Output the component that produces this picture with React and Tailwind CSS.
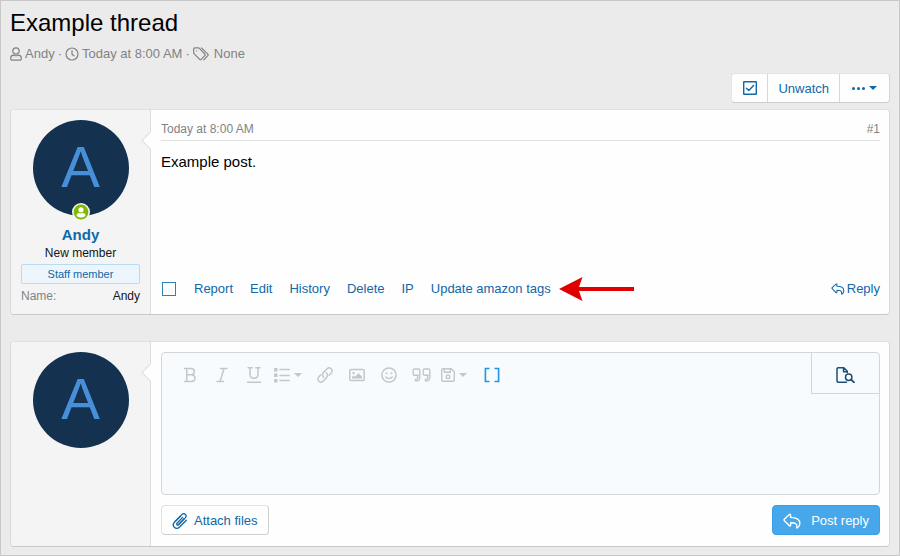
import React from "react";

function Icon({ children, className = "size-4", box = "0 0 16 16", stroke = 1.3 }) {
  return (
    <svg
      className={`shrink-0 ${className}`}
      viewBox={box}
      fill="none"
      stroke="currentColor"
      strokeWidth={stroke}
      strokeLinecap="round"
      strokeLinejoin="round"
      aria-hidden="true"
    >
      {children}
    </svg>
  );
}

const UserIcon = () => (
  <Icon className="h-[14px] w-3" box="0 0 12 14" stroke={1.2}>
    <circle cx="6" cy="4" r="3.2" />
    <path d="M3.6 8.2C1.8 8.4.7 9.6.7 11.2v.9c0 .6.4 1 1 1h8.6c.6 0 1-.4 1-1v-.9c0-1.6-1.1-2.8-2.900-3-1.500.700-3.300.700-4.800 0z" />
  </Icon>
);

const ClockIcon = () => (
  <Icon className="size-[14px]" box="0 0 14 14" stroke={1.2}>
    <circle cx="7" cy="7" r="6" />
    <path d="M7 3.500V7.300l2 1.500" />
  </Icon>
);

const TagsIcon = () => (
  <Icon className="h-[14px] w-4" box="0 0 16 14" stroke={1.2}>
    <path d="M.7 1.700v4.100c0 .3.100.6.300.8l5.600 5.700c.5.500 1.200.500 1.600 0l3.600-3.700c.5-.5.500-1.200 0-1.600L6.200 1.200C6 1 5.700.8 5.400.8H1.600c-.5 0-.9.4-.9.9z" />
    <path d="M8.500.900l6.300 6.200c.5.500.5 1.100 0 1.600l-4 4.200" />
    <circle cx="3.600" cy="3.800" r=".6" fill="currentColor" stroke="none" />
  </Icon>
);

const ReplyIcon = ({ className, stroke }) => (
  <Icon className={className} box="0 0 18 16" stroke={stroke}>
    <path d="M1.200 6.300L6.400 1.400c.5-.4 1.200-.1 1.200.5v2.500c4.900.1 9.200 1.200 9.200 6 0 1.900-1.100 3.500-2.300 4.400-.4.300-.9-.1-.8-.5.900-3.500-.9-4.500-6.100-4.600v2.500c0 .7-.7 1-1.200.5L1.200 7.400c-.3-.3-.3-.8 0-1.100z" />
  </Icon>
);

const Caret = () => (
  <svg className="h-1 w-2 shrink-0" viewBox="0 0 8 4" fill="currentColor" aria-hidden="true">
    <path d="M0 0h8L4 4z" />
  </svg>
);

const BoldIcon = () => (
  <Icon stroke={1.500}>
    <path d="M2.500 1.500H9c2.200 0 3.300 1.200 3.300 3S11.200 7.700 9 7.700H4.700M9 7.700c2.700 0 4 1.200 4 3.300s-1.300 3.500-3.800 3.500H2.500M4.700 1.500v13" />
  </Icon>
);
const ItalicIcon = () => (
  <Icon stroke={1.500}>
    <path d="M6.500 1.500H13M3 14.500h6.500M10 1.500l-4 13" />
  </Icon>
);
const UnderlineIcon = () => (
  <Icon stroke={1.500}>
    <path d="M2 .8h4.200M9.800.8H14M4 .8v6.500c0 2.500 1.500 4 4 4s4-1.500 4-4V.8M1.500 15.200h13" />
  </Icon>
);
const ListIcon = () => (
  <Icon>
    <path d="M6 2.500h9.300M6 8.500h9.300M6 13.500h9.300" strokeWidth="1.500" />
    <g fill="currentColor" stroke="none">
      <rect x="0" y="1" width="3.500" height="3.500" rx=".6" />
      <rect x="0" y="6.500" width="3.500" height="3.500" rx=".6" />
      <rect x="0" y="12" width="3.500" height="3.500" rx=".6" />
    </g>
  </Icon>
);
const LinkIcon = () => (
  <Icon stroke={1.500}>
    <path d="M6.700 10.200c-1.500-1.300-1.500-3.500-.2-4.900l3.300-3.400c1.300-1.300 3.200-1.300 4.400-.1s1.200 3.100-.1 4.400l-1.900 2" />
    <path d="M9.300 5.800c1.500 1.300 1.500 3.500.2 4.900l-3.300 3.400c-1.300 1.300-3.200 1.300-4.400.1s-1.200-3.100.1-4.400l1.900-2" />
  </Icon>
);
const ImageIcon = () => (
  <Icon stroke={1.500}>
    <rect x=".8" y="2.500" width="14.400" height="11" rx="1.200" />
    <circle cx="4.500" cy="6" r="1.200" fill="currentColor" stroke="none" />
    <path d="M3 11.500V10l1.700-1.500L6 9.700l3.500-3.400L13 9.500v2z" fill="currentColor" stroke="none" />
  </Icon>
);
const SmileIcon = () => (
  <Icon stroke={1.500}>
    <circle cx="8" cy="8" r="7.100" />
    <circle cx="5.500" cy="6.300" r="1" fill="currentColor" stroke="none" />
    <circle cx="10.500" cy="6.300" r="1" fill="currentColor" stroke="none" />
    <path d="M4.800 10c1.600 2 4.800 2 6.400 0" />
  </Icon>
);
const QuoteIcon = () => (
  <Icon className="h-4 w-[19px]" box="0 0 19 16" stroke={1.400}>
    <path d="M6.300 8.300H2.700c-.9 0-1.500-.6-1.500-1.500V3.500c0-.9.6-1.500 1.500-1.500h3.600c.9 0 1.500.6 1.500 1.500v6.800c0 2.200-1.400 3.600-3.600 3.700-.8 0-1-.3-1-.9s.3-.9 1-1c1-.1 1.500-.7 1.500-1.700V8.300" />
    <path d="M16.300 8.300h-3.600c-.9 0-1.500-.6-1.500-1.500V3.500c0-.9.6-1.500 1.500-1.500h3.600c.9 0 1.500.6 1.500 1.500v6.800c0 2.200-1.400 3.600-3.600 3.700-.8 0-1-.3-1-.9s.3-.9 1-1c1-.1 1.500-.7 1.500-1.700V8.300" />
  </Icon>
);
const SaveIcon = () => (
  <Icon className="size-[14px]" box="0 0 14 14" stroke={1.400}>
    <path d="M.7 2c0-.7.6-1.300 1.300-1.300h8.300l3 3V12c0 .7-.6 1.300-1.300 1.300H2c-.7 0-1.300-.6-1.300-1.300z" />
    <path d="M3.400.8v3.400h6V.8" />
    <circle cx="7" cy="8.800" r="1.800" />
  </Icon>
);
const BracketsIcon = () => (
  <Icon stroke={1.600}>
    <path d="M4.700 1.500H1.400v13h3.300M11.300 1.500h3.300v13h-3.300" strokeLinecap="square" strokeLinejoin="miter" />
  </Icon>
);
const PreviewIcon = () => (
  <Icon className="h-4 w-[19px]" box="0 0 19 16" stroke={1.500}>
    <path d="M10.500 15.200H2.200c-.7 0-1.200-.5-1.200-1.200V2C1 1.300 1.500.8 2.200.8h5.600L11.300 4.300v1.200M7.500 1v3.800h3.600" />
    <circle cx="12.700" cy="10.200" r="3.200" />
    <path d="M15.200 12.600l2.800 2.700" strokeWidth="1.800" />
  </Icon>
);
const ClipIcon = () => (
  <Icon className="size-4" stroke={1.300}>
    <path d="M10.600 4.400L5 10.200c-1.100 1.200.4 2.700 1.600 1.600l6.700-6.900c2.300-2.500-1-5.700-3.500-3.300L2.500 9c-3.500 3.800 1.400 8.600 5.100 5l6.700-6.800" />
    <path d="M12 5.800l-5.600 5.800M8.300 3.300L3.600 8.100" />
  </Icon>
);

const tools = [
  { label: "Bold", icon: <BoldIcon /> },
  { label: "Italic", icon: <ItalicIcon /> },
  { label: "Underline", icon: <UnderlineIcon /> },
  { label: "List", icon: <ListIcon />, menu: true },
  { label: "Insert link", icon: <LinkIcon /> },
  { label: "Insert image", icon: <ImageIcon /> },
  { label: "Smilies", icon: <SmileIcon /> },
  { label: "Quote", icon: <QuoteIcon /> },
  { label: "Drafts", icon: <SaveIcon />, menu: true },
];

function Avatar({ online }) {
  return (
    <div className="relative mx-auto flex size-24 items-center justify-center rounded-full bg-[#14314f] pb-[2px] text-[58px] leading-none text-[#478fd9]">
      A
      {online && (
        <svg
          className="absolute -bottom-[5px] left-1/2 size-[18px] -translate-x-1/2"
          viewBox="0 0 18 18"
          aria-hidden="true"
        >
          <circle cx="9" cy="9" r="9" fill="#f4f4f4" />
          <circle cx="9" cy="9" r="7.400" fill="#7fb900" />
          <circle cx="9" cy="6.800" r="2.600" fill="#fff" />
          <path d="M4.500 12.700c0-1.600 1.100-2.600 2.400-2.600 1.300.5 2.900.5 4.200 0 1.300 0 2.400 1 2.400 2.600-1.100 1.100-2.700 1.800-4.500 1.800s-3.400-.7-4.500-1.800z" fill="#fff" />
        </svg>
      )}
    </div>
  );
}

function Message({ side, children }) {
  return (
    <article className="flex min-h-[206px] rounded border border-t-[#e0e0e0] border-r-[#d8d8d8] border-b-[#c8c8c8] border-l-[#d8d8d8] bg-[#fefefe]">
      <div className="relative w-[140px] shrink-0 rounded-l border-r border-[#dcdcdc] bg-[#f4f4f4] py-[10px] pr-[10px] pl-[10px]">
        {side}
        <span className="absolute top-6 -right-[7px] size-[13px] rotate-45 border-b border-l border-[#dcdcdc] bg-[#fefefe]" />
        <span className="absolute top-5 -right-[11px] h-5 w-[10px] bg-[#fefefe]" />
      </div>
      <div className="flex min-w-0 flex-1 flex-col py-[10px] pr-[9px] pl-[10px]">{children}</div>
    </article>
  );
}

export default function App() {
  return (
    <main className="min-h-screen border border-[#c8c8c8] bg-[#ebebeb] px-[9px] pb-2 font-['Liberation_Sans',Arial,sans-serif] text-[13px] leading-4 text-[#141414]">
      <header className="pt-2">
        <h1 className="text-2xl leading-7 text-black">Example thread</h1>
        <div className="mt-[9px] flex items-center gap-[3px] text-[#828282]">
          <UserIcon />
          <a href="#andy">Andy</a>
          <span>·</span>
          <ClockIcon />
          <time>Today at 8:00 AM</time>
          <span>·</span>
          <TagsIcon />
          <span className="pl-[2px]">None</span>
        </div>
      </header>

      <div className="mt-[11px] flex justify-end">
        <div className="flex h-[30px] divide-x divide-[#d8d8d8] rounded border border-t-[#e4e4e4] border-r-[#d4d4d4] border-b-[#cccccc] border-l-[#e4e4e4] bg-[#fefefe] text-[#0f68a8]">
          <button type="button" aria-label="Select for moderation" className="flex w-9 items-center justify-center">
            <Icon className="size-[14px]" box="0 0 14 14" stroke={1.400}>
              <rect x=".7" y=".7" width="12.600" height="12.600" rx=".5" />
              <path d="M3.400 7.200l2.400 2.300 4.800-5" />
            </Icon>
          </button>
          <button type="button" className="px-[10px] pt-px">Unwatch</button>
          <button type="button" aria-label="More options" className="flex w-[49px] items-center justify-center gap-1">
            <svg className="h-[3px] w-[13px]" viewBox="0 0 13 3" fill="currentColor" aria-hidden="true">
              <circle cx="1.500" cy="1.500" r="1.500" />
              <circle cx="6.500" cy="1.500" r="1.500" />
              <circle cx="11.500" cy="1.500" r="1.500" />
            </svg>
            <Caret />
          </button>
        </div>
      </div>

      <div className="mt-[6px] flex flex-col gap-[26px]">
        <Message
          side={
            <div className="text-center text-xs leading-4">
              <Avatar online />
              <a href="#andy" className="mt-[10px] block text-[15px] leading-[18px] font-bold text-[#0f68a8]">Andy</a>
              <div className="mt-px">New member</div>
              <div className="mt-[3px] rounded-xs border border-[#b5dbf5] bg-[#edf6fd] text-[11px] leading-[18px] text-[#0f68a8]">
                Staff member
              </div>
              <dl className="mt-1 flex justify-between">
                <dt className="text-[#828282]">Name:</dt>
                <dd>Andy</dd>
              </dl>
            </div>
          }
        >
          <div className="flex justify-between border-b border-[#dfdfdf] pt-px pb-[3px] text-xs leading-4 text-[#828282]">
            <time>Today at 8:00 AM</time>
            <a href="#post-1">#1</a>
          </div>
          <p className="mt-[11px] text-[15px] leading-5 text-black">Example post.</p>
          <div className="mt-auto mb-[3px] flex items-center text-[#0f68a8]">
            <input
              type="checkbox"
              aria-label="Select post"
              className="mr-[18px] ml-px size-[14px] appearance-none border border-[#2f7fb8]"
            />
            <nav className="flex gap-[17px]">
              <a href="#report">Report</a>
              <a href="#edit">Edit</a>
              <a href="#history">History</a>
              <a href="#delete">Delete</a>
              <a href="#ip">IP</a>
              <a href="#tags">Update amazon tags</a>
            </nav>
            <svg className="ml-2 h-6 w-[75px] shrink-0" viewBox="0 0 75 24" fill="#e00000" aria-hidden="true">
              <path d="M0 12L23.500 0 20 10h55v4H20l3.500 10z" />
            </svg>
            <a href="#reply" className="ml-auto flex items-center gap-[2px]">
              <ReplyIcon className="h-3 w-[14px]" stroke={1.400} />
              Reply
            </a>
          </div>
        </Message>

        <Message side={<Avatar />}>
          <div className="flex h-[143px] flex-col rounded border border-[#d3d5d7] bg-[#f7fbfe]">
            <div className="flex h-[41px] justify-between">
              <div className="flex items-center pt-[3px] pl-3 text-[#c4c6c8]">
                {tools.map((t) => (
                  <button
                    key={t.label}
                    type="button"
                    aria-label={t.label}
                    className={`flex h-8 items-center gap-1 ${t.menu ? "w-[39px] pl-1" : "w-8 justify-center"}`}
                  >
                    {t.icon}
                    {t.menu && <Caret />}
                  </button>
                ))}
                <button type="button" aria-label="Toggle BB code" className="flex size-8 items-center justify-center text-[#2196e8]">
                  <BracketsIcon />
                </button>
              </div>
              <button
                type="button"
                aria-label="Preview"
                className="flex w-[68px] items-center justify-center border-b border-l border-[#d3d5d7] pt-[3px] text-[#1d4f78]"
              >
                <PreviewIcon />
              </button>
            </div>
            <textarea aria-label="Your reply" className="w-full flex-1 resize-none bg-transparent px-3 outline-none" />
          </div>
          <div className="mt-[10px] flex justify-between">
            <button
              type="button"
              className="flex h-[30px] items-center gap-[6px] rounded border border-t-[#e2e2e2] border-r-[#cfcfcf] border-b-[#cfcfcf] border-l-[#e2e2e2] px-[10px] pt-px text-[#0f68a8]"
            >
              <ClipIcon />
              Attach files
            </button>
            <button
              type="button"
              className="flex h-[30px] items-center gap-[10px] rounded border border-[#3a9fe6] bg-[#47a7eb] px-[10px] pt-px text-white"
            >
              <ReplyIcon className="h-4 w-[18px]" stroke={1.400} />
              Post reply
            </button>
          </div>
        </Message>
      </div>
    </main>
  );
}
